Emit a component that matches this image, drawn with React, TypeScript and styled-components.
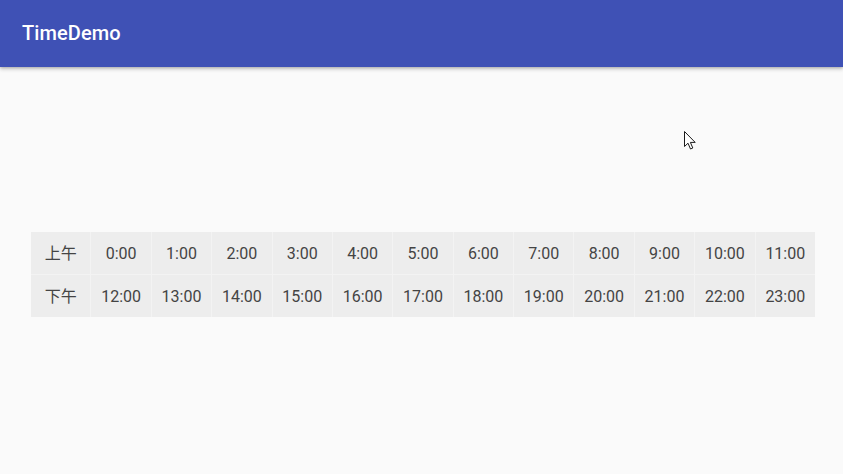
import React from "react";
import styled, { createGlobalStyle } from "styled-components";

const Global = createGlobalStyle`
  html, body { margin: 0; padding: 0; background: #fafafa; }
  body { font-family: Roboto, "Noto Sans CJK SC", sans-serif; }
  #root { min-height: 474px; }
`;

const Page = styled.div`
  position: relative;
  width: 843px;
  height: 474px;
  background: #fafafa;
  overflow: hidden;
`;

const AppBar = styled.header`
  height: 67px;
  background: #3f51b5;
  display: flex;
  align-items: center;
  padding-left: 22px;
  box-shadow: 0 2px 4px rgba(0, 0, 0, 0.22), 0 1px 2px rgba(0, 0, 0, 0.12);
  position: relative;
  z-index: 1;
`;

const Title = styled.h1`
  margin: 0;
  color: #ffffff;
  font-family: Roboto, sans-serif;
  font-weight: 500;
  font-size: 20px;
  letter-spacing: 0.1px;
  padding-bottom: 1px;
`;

const Content = styled.main`
  padding: 165px 28px 0 31px;
`;

const Grid = styled.div`
  display: grid;
  grid-template-columns: repeat(13, 1fr);
  grid-auto-rows: 42px;
  gap: 1px;
  width: 784px;
  background: #f3f3f3;
`;

const Cell = styled.div<{ $label?: boolean }>`
  background: #ededed;
  display: flex;
  align-items: center;
  justify-content: center;
  color: #444444;
  font-family: Roboto, "Noto Sans CJK SC", sans-serif;
  font-size: 16px;
  padding-top: ${(p) => (p.$label ? "0" : "1px")};
  padding-bottom: ${(p) => (p.$label ? "3px" : "0")};
`;

const Cursor = styled.svg`
  position: absolute;
  left: 684px;
  top: 131px;
`;

const rows = [
  { label: "上午", start: 0 },
  { label: "下午", start: 12 },
];

export default function App() {
  return (
    <Page>
      <Global />
      <AppBar>
        <Title>TimeDemo</Title>
      </AppBar>
      <Content>
        <Grid>
          {rows.map((r) => (
            <React.Fragment key={r.label}>
              <Cell $label>{r.label}</Cell>
              {Array.from({ length: 12 }, (_, i) => (
                <Cell key={i}>{`${r.start + i}:00`}</Cell>
              ))}
            </React.Fragment>
          ))}
        </Grid>
      </Content>
      <Cursor width="13" height="20" viewBox="0 0 13 20">
        <path
          d="M0.5 0.5 L0.5 15.5 L4 12.2 L6.5 18 L8.8 17 L6.4 11.4 L11.2 11.4 Z"
          fill="#ffffff"
          stroke="#1a1a1a"
          strokeWidth="1"
          strokeLinejoin="round"
        />
      </Cursor>
    </Page>
  );
}
